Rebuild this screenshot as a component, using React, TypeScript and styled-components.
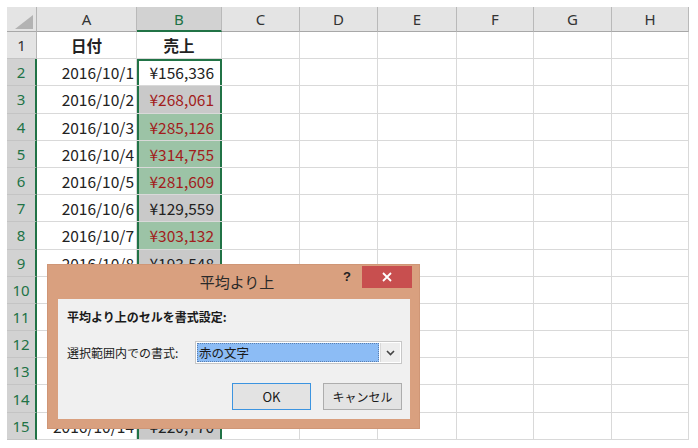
import React from "react";
import styled, { createGlobalStyle, css } from "styled-components";

const GlobalStyle = createGlobalStyle`
  html, body {
    margin: 0;
    padding: 0;
    background: #ffffff;
  }
  body {
    font-family: "Noto Sans CJK JP", "Noto Sans", sans-serif;
  }
`;

const GREEN = "#217346";
const RED = "#a21d1d";

const Page = styled.div`
  position: relative;
  width: 698px;
  height: 448px;
  padding: 7px 0 0 7px;
  box-sizing: border-box;
  overflow: hidden;
`;

const Sheet = styled.div`
  display: grid;
  grid-template-columns: 30px 100px 85px 78px 78px 79px 77px 78px 77px;
  grid-template-rows: 25px repeat(15, 27.2px);
  width: 682px;
`;

const Corner = styled.div`
  background: #e4e4e4;
  border-right: 1px solid #b5b5b5;
  border-bottom: 1px solid #a8a8a8;
  box-sizing: border-box;
  display: flex;
  align-items: flex-end;
  justify-content: flex-end;
  padding: 0 3px 2px 0;
`;

const ColHead = styled.div<{ $active?: boolean }>`
  background: ${(p) => (p.$active ? "#d2d2d2" : "#e4e4e4")};
  color: ${(p) => (p.$active ? GREEN : "#333333")};
  border-right: 1px solid #b9b9b9;
  border-bottom: ${(p) => (p.$active ? `2px solid ${GREEN}` : "1px solid #a8a8a8")};
  box-sizing: border-box;
  display: flex;
  align-items: center;
  justify-content: center;
  font-family: "Noto Sans", "Liberation Sans", sans-serif;
  font-size: 15px;
`;

const RowHead = styled.div<{ $active?: boolean }>`
  background: ${(p) => (p.$active ? "#d2d2d2" : "#e4e4e4")};
  color: ${(p) => (p.$active ? GREEN : "#333333")};
  border-bottom: 1px solid #c4c4c4;
  border-right: ${(p) => (p.$active ? `2px solid ${GREEN}` : "1px solid #b5b5b5")};
  box-sizing: border-box;
  display: flex;
  align-items: center;
  justify-content: center;
  font-family: "Noto Sans", "Liberation Sans", sans-serif;
  font-size: 15px;
`;

type Fill = "white" | "gray" | "green";

const fills: Record<Fill, string> = {
  white: "#ffffff",
  gray: "#c9c9c9",
  green: "#9cc3a6",
};

const Cell = styled.div<{
  $align?: "left" | "center" | "right";
  $fill?: Fill;
  $red?: boolean;
  $bold?: boolean;
}>`
  background: ${(p) => fills[p.$fill || "white"]};
  color: ${(p) => (p.$red ? RED : "#222222")};
  border-right: 1px solid #d9d9d9;
  border-bottom: 1px solid #d9d9d9;
  box-sizing: border-box;
  display: flex;
  align-items: center;
  justify-content: ${(p) =>
    p.$align === "center" ? "center" : p.$align === "left" ? "flex-start" : "flex-end"};
  padding: 0 2px 0 2px;
  font-size: 15.5px;
  white-space: nowrap;
  overflow: hidden;
  ${(p) =>
    p.$bold &&
    css`
      font-weight: 700;
    `}
`;

/* column B cells carry the green selection frame of B2:B15 */
const ValueCell = styled(Cell)<{ $first?: boolean }>`
  padding-right: 8px;
  border-right: none;
  box-shadow: inset 2px 0 0 ${GREEN}, inset -2px 0 0 ${GREEN}
    ${(p) => (p.$first ? `, inset 0 2px 0 ${GREEN}` : "")};
`;

/* dialog */

const Dialog = styled.div`
  position: absolute;
  left: 48px;
  top: 265px;
  width: 371px;
  height: 163px;
  background: #d9a07f;
  box-sizing: border-box;
  padding: 0 9px 9px 10px;
  display: flex;
  flex-direction: column;
  box-shadow: 0 0 0 1px #cf9676;
`;

const TitleBar = styled.div`
  height: 34px;
  display: grid;
  grid-template-columns: 1fr auto 1fr;
  align-items: start;
  margin-right: -2px;
`;

const Title = styled.div`
  grid-column: 2;
  font-size: 15px;
  color: #2a2a2a;
  line-height: 34px;
  padding-left: 4px;
`;

const TitleButtons = styled.div`
  grid-column: 3;
  justify-self: end;
  display: flex;
  align-items: flex-start;
  gap: 11px;
  margin-top: 1px;
`;

const Help = styled.span`
  font-family: "Liberation Sans", sans-serif;
  font-weight: 700;
  font-size: 13px;
  color: #222;
  line-height: 22px;
`;

const Close = styled.div`
  width: 50px;
  height: 22px;
  background: #c84f4f;
  display: flex;
  align-items: center;
  justify-content: center;
`;

const Body = styled.div`
  flex: 1;
  background: #f0f0f0;
  padding: 10px 8px 9px 9px;
  display: flex;
  flex-direction: column;
  font-size: 12px;
  color: #1a1a1a;
`;

const Heading = styled.div`
  font-weight: 700;
  line-height: 16px;
`;

const FieldRow = styled.div`
  display: flex;
  align-items: center;
  margin-top: 16px;
`;

const Label = styled.div`
  width: 128px;
  flex: none;
`;

const Select = styled.div`
  width: 208px;
  height: 23px;
  box-sizing: border-box;
  border: 1px solid #c7c7c7;
  background: #ffffff;
  display: flex;
  padding: 1px;
  gap: 1px;
`;

const SelectValue = styled.div`
  flex: 1;
  background: #8cbcf5;
  border: 1px dotted #5a7fb0;
  display: flex;
  align-items: center;
  padding-left: 1px;
  color: #1a1a1a;
  font-size: 12.5px;
`;

const SelectArrow = styled.div`
  width: 19px;
  display: flex;
  align-items: center;
  justify-content: center;
  background: #ededed;
  border-left: 1px solid #d8d8d8;
`;

const ButtonRow = styled.div`
  display: flex;
  justify-content: flex-end;
  gap: 12px;
  margin-top: 19px;
`;

const Button = styled.div<{ $default?: boolean }>`
  width: 79px;
  height: 27px;
  box-sizing: border-box;
  border: 1px solid ${(p) => (p.$default ? "#3c94e0" : "#adadad")};
  background: #e3e3e3;
  display: flex;
  align-items: center;
  justify-content: center;
  font-size: ${(p) => (p.$default ? "13px" : "12px")};
  color: #1a1a1a;
`;

const rows: { date: string; value: string; fill: Fill; red: boolean }[] = [
  { date: "2016/10/1", value: "¥156,336", fill: "white", red: false },
  { date: "2016/10/2", value: "¥268,061", fill: "gray", red: true },
  { date: "2016/10/3", value: "¥285,126", fill: "green", red: true },
  { date: "2016/10/4", value: "¥314,755", fill: "green", red: true },
  { date: "2016/10/5", value: "¥281,609", fill: "green", red: true },
  { date: "2016/10/6", value: "¥129,559", fill: "gray", red: false },
  { date: "2016/10/7", value: "¥303,132", fill: "green", red: true },
  { date: "2016/10/8", value: "¥193,548", fill: "gray", red: false },
  { date: "2016/10/9", value: "¥176,420", fill: "gray", red: false },
  { date: "2016/10/10", value: "¥298,310", fill: "green", red: true },
  { date: "2016/10/11", value: "¥204,115", fill: "gray", red: false },
  { date: "2016/10/12", value: "¥287,902", fill: "green", red: true },
  { date: "2016/10/13", value: "¥168,744", fill: "gray", red: false },
  { date: "2016/10/14", value: "¥220,770", fill: "gray", red: false },
];

const letters = ["A", "B", "C", "D", "E", "F", "G", "H"];

export default function App() {
  return (
    <Page>
      <GlobalStyle />
      <Sheet>
        <Corner>
          <svg width="18" height="14" viewBox="0 0 18 14">
            <polygon points="18,0 18,14 0,14" fill="#b3b3b3" />
          </svg>
        </Corner>
        {letters.map((l) => (
          <ColHead key={l} $active={l === "B"}>
            {l}
          </ColHead>
        ))}

        <RowHead>1</RowHead>
        <Cell $align="center" $bold>
          日付
        </Cell>
        <Cell $align="center" $bold>
          売上
        </Cell>
        {letters.slice(2).map((l) => (
          <Cell key={l} />
        ))}

        {rows.map((r, i) => (
          <React.Fragment key={r.date}>
            <RowHead $active>{i + 2}</RowHead>
            <Cell>{r.date}</Cell>
            <ValueCell $fill={r.fill} $red={r.red} $first={i === 0}>
              {r.value}
            </ValueCell>
            {letters.slice(2).map((l) => (
              <Cell key={l} />
            ))}
          </React.Fragment>
        ))}
      </Sheet>

      <Dialog>
        <TitleBar>
          <Title>平均より上</Title>
          <TitleButtons>
            <Help>?</Help>
            <Close>
              <svg width="10" height="10" viewBox="0 0 10 10">
                <path d="M1 1 L9 9 M9 1 L1 9" stroke="#ffffff" strokeWidth="1.8" />
              </svg>
            </Close>
          </TitleButtons>
        </TitleBar>
        <Body>
          <Heading>平均より上のセルを書式設定:</Heading>
          <FieldRow>
            <Label>選択範囲内での書式:</Label>
            <Select>
              <SelectValue>赤の文字</SelectValue>
              <SelectArrow>
                <svg width="9" height="6" viewBox="0 0 9 6">
                  <path d="M1 1 L4.5 4.5 L8 1" stroke="#444" strokeWidth="1.6" fill="none" />
                </svg>
              </SelectArrow>
            </Select>
          </FieldRow>
          <ButtonRow>
            <Button $default>OK</Button>
            <Button>キャンセル</Button>
          </ButtonRow>
        </Body>
      </Dialog>
    </Page>
  );
}
